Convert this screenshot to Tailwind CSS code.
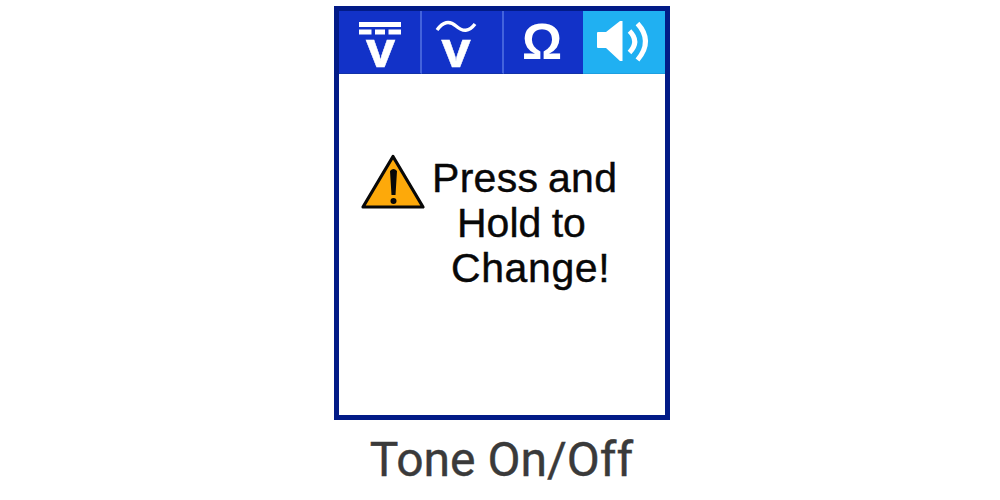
<!DOCTYPE html>
<html lang="en">
<head>
  <meta charset="UTF-8" />
  <meta name="viewport" content="width=device-width, initial-scale=1.0"/>
  <title>Tone On/Off</title>
  <script src="https://cdn.jsdelivr.net/npm/@tailwindcss/browser@4"></script>
</head>
<body class="bg-white">

<div class="w-[1000px] h-[500px] overflow-hidden flex flex-col items-center pt-1.5 pl-1">
  <!-- Meter Screen -->
  <main class="w-[336px] h-[414px] shrink-0 bg-white border-[5px] border-[#021b87]">
    <!-- Mode Tabs -->
    <nav class="flex h-[63px] bg-[#1232c8]">
      <div class="w-[83px] border-r-2 border-b border-r-[#4363dc] border-b-[#1232a8]">
        <svg class="w-[81px] h-[62px] overflow-visible" viewBox="339 11 81 62" fill="#fff">
          <path d="M359 22h42v5h-42zM359 29.5h12.5v5h-12.5zM375 29.5h10v5h-10zM388.5 29.5h12.5v5h-12.5z"/>
          <text x="380.5" y="67" text-anchor="middle" font-family="Open Sans, sans-serif" font-weight="700" font-size="51" stroke="#fff" stroke-width="0.5">v</text>
        </svg>
      </div>
      <div class="w-[82px] border-r-2 border-b border-r-[#4363dc] border-b-[#1232a8]">
        <svg class="w-[80px] h-[62px] overflow-visible" viewBox="422 11 80 62" fill="#fff">
          <path d="M437 30C443 22 449 20 456 26S469 32 475 24" fill="none" stroke="#fff" stroke-width="3.4"/>
          <text x="456" y="67" text-anchor="middle" font-family="Open Sans, sans-serif" font-weight="700" font-size="51" stroke="#fff" stroke-width="0.5">v</text>
        </svg>
      </div>
      <div class="w-[79px] border-b border-b-[#1232a8]">
        <svg class="w-[79px] h-[62px] overflow-visible" viewBox="504 11 79 62" fill="#fff">
          <text x="542" y="59" text-anchor="middle" font-family="Liberation Sans, sans-serif" font-weight="700" font-size="50">Ω</text>
        </svg>
      </div>
      <div class="flex-1 bg-[#20b0f2] border-b border-b-[#1d9fe0]">
        <svg class="w-[82px] h-[62px]" viewBox="583 11 82 62" fill="#fff">
          <path d="M598 32h8l14-11h2.5v40h-2.5l-14-13h-8q-1 0-1-1v-14q0-1 1-1z"/>
          <path d="M629.5 31Q640 41.5 629.5 52.5M637.5 23.5Q653.5 41 637.5 60" fill="none" stroke="#fff" stroke-width="5"/>
        </svg>
      </div>
    </nav>

    <!-- Message -->
    <div class="flex pt-[79px] pl-[21px] font-['Liberation_Sans',sans-serif] text-[41px] leading-[45px] tracking-[0.3px] text-[#080808] [-webkit-text-stroke:0.4px_#080808]">
      <svg class="w-[66px] h-[58px] shrink-0" viewBox="360 153 66 58">
        <path d="M393 156.5L423 207H363Z" fill="#fda90a" stroke="#080808" stroke-width="3.2" stroke-linejoin="round"/>
        <path d="M390 171Q393.5 167 397 171L395.5 195H391.5Z" fill="#080808"/>
        <circle cx="393.5" cy="201" r="3" fill="#080808"/>
      </svg>
      <div class="pt-[3px] pl-1.5 whitespace-nowrap">
        <p class="[word-spacing:-2px]">Press and</p>
        <p class="pl-[25px] tracking-normal [word-spacing:-1px]">Hold to</p>
        <p class="pl-[19px] tracking-[0.6px]">Change!</p>
      </div>
    </div>
  </main>

  <h1 class="mt-3 mr-px font-[Roboto,sans-serif] text-[48px] leading-[56px] text-[#3a3a3a] whitespace-nowrap [-webkit-text-stroke:0.4px_#3a3a3a]">Tone On/Off</h1>
</div>

</body>
</html>
